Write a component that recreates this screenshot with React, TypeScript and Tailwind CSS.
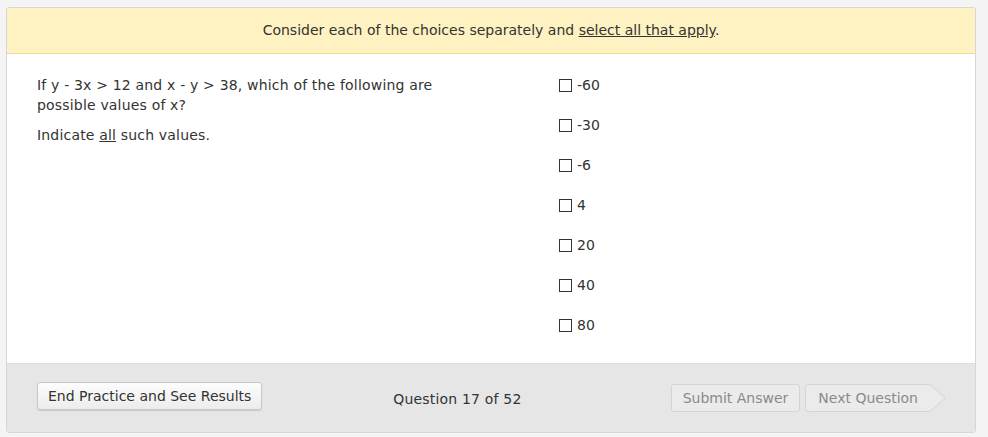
import React from "react";

const choices = ["-60", "-30", "-6", "4", "20", "40", "80"];

export default function App() {
  return (
    <div
      className="w-[988px] h-[437px] bg-[#f4f4f4] pt-[7px] pl-[6px] text-[#333333]"
      style={{ fontFamily: '"DejaVu Sans", Verdana, sans-serif' }}
    >
      <div className="w-[970px] h-[426px] flex flex-col border border-[#d6d6d6] rounded-[3px] overflow-hidden bg-white">
        <div className="h-[46px] shrink-0 bg-[#fff2c2] border-b border-[#f0dc8c] flex items-center justify-center text-[14px]">
          <span>
            Consider each of the choices separately and{" "}
            <span className="underline">select all that apply</span>.
          </span>
        </div>
        <div className="flex-1 flex bg-white">
          <div className="w-[552px] shrink-0 pl-[30px] pt-[21px] text-[14px] leading-[20px]">
            <p className="w-[430px] tracking-[0.18px]">
              If y - 3x &gt; 12 and x - y &gt; 38, which of the following are possible values of x?
            </p>
            <p className="mt-[10px] tracking-[0.18px]">
              Indicate <span className="underline">all</span> such values.
            </p>
          </div>
          <div className="pt-[21px] flex flex-col gap-[20px] text-[14px] leading-[20px]">
            {choices.map((c) => (
              <div key={c} className="flex items-center h-[20px]">
                <span className="w-[13px] h-[13px] border border-[#333333] bg-white mr-[5px] inline-block" />
                <span>{c}</span>
              </div>
            ))}
          </div>
        </div>
        <div className="h-[69px] shrink-0 bg-[#e6e6e6] border-t border-[#dddddd] flex items-center pl-[30px] pr-[30px] text-[14px]">
          <button className="h-[28px] px-[10px] bg-gradient-to-b from-[#fdfdfd] to-[#ececec] border border-[#c8c8c8] rounded-[3px] shadow-[0_1px_1px_rgba(0,0,0,0.12)] text-[#333333] -mt-[4px]">
            End Practice and See Results
          </button>
          <div className="ml-[131px] pt-[3px] tracking-[0.18px]">Question 17 of 52</div>
          <div className="ml-auto flex items-center gap-[5px]">
            <button className="h-[28px] px-[11px] bg-[#ebebeb] border border-[#d4d4d4] rounded-[3px] text-[#8a8a8a]">
              Submit Answer
            </button>
            <div className="relative h-[28px] flex items-center">
              <svg className="absolute left-0 top-0" width="141" height="28" viewBox="0 0 141 28">
                <path
                  d="M3.5 0.5 H125 L140 14 L125 27.5 H3.5 Q0.5 27.5 0.5 24.5 V3.5 Q0.5 0.5 3.5 0.5 Z"
                  fill="#ebebeb"
                  stroke="#d4d4d4"
                />
              </svg>
              <span className="relative pl-[13px] pr-[27px] text-[#8a8a8a]">Next Question</span>
            </div>
          </div>
        </div>
      </div>
    </div>
  );
}
